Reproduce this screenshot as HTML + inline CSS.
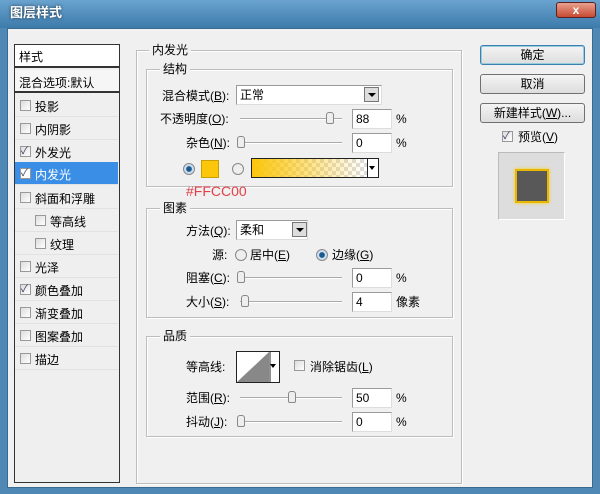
<!DOCTYPE html><html><head><meta charset="utf-8"><style>
*{margin:0;padding:0;box-sizing:border-box}
body{width:600px;height:494px;overflow:hidden;background:#4f88b5;font-family:"Liberation Sans","Noto Sans CJK SC",sans-serif;font-size:12px;color:#000;position:relative}
.a{position:absolute}
.t{position:absolute;white-space:nowrap;line-height:14px}
.fs{position:absolute;border:1px solid #bdbdbd;box-shadow:inset 1px 1px 0 #fff,1px 1px 0 #fff}
.lg{position:absolute;background:#f0f0f0;padding:0 3px;line-height:14px}
.in{position:absolute;background:#fff;border:1px solid #9a9a9a;border-right-color:#ddd;border-bottom-color:#ddd;padding-left:3px;line-height:18px}
.cb{position:absolute;width:11px;height:11px;border:1px solid #999;background:linear-gradient(135deg,#ddd,#fff)}
.sl{position:absolute;height:2px;border-top:1px solid #aaa;border-bottom:1px solid #fff}
.th{position:absolute;width:8px;height:12px;border:1px solid #888;border-radius:3px 3px 2px 2px;background:#eee}
.btn{position:absolute;border:1px solid #707070;border-radius:3px;background:linear-gradient(#f4f4f4,#ddd);text-align:center;line-height:18px}
.row{position:absolute;left:15px;width:103px;height:23px;border-bottom:1px solid #e2e2e2}
.row span{position:absolute;top:4px;left:20px}
.row .cb{left:5px;top:6px}
.dd{position:absolute;width:15px;height:15px;border:1px solid #777;background:#ddd}
.dd:after{content:"";position:absolute;left:3px;top:5px;border:4px solid transparent;border-top:4px solid #000}
.rd{position:absolute;width:12px;height:12px;border-radius:50%;border:1px solid #888;background:#eee}
</style></head><body>
<div class="a" style="left:0;top:0;width:600px;height:28px;background:linear-gradient(#6aa3cf,#3d7bab)"></div>
<div class="t" style="left:10px;top:6px;color:#fff;font-weight:bold;font-size:13px;text-shadow:0 0 3px #234">图层样式</div>
<div class="a" style="left:556px;top:2px;width:40px;height:16px;border:1px solid #5a2020;border-radius:3px;background:linear-gradient(#e8a090,#c84a30);color:#fff;text-align:center;font-weight:bold;line-height:14px">x</div>
<div class="a" style="left:7px;top:28px;width:586px;height:460px;background:#f0f0f0;border:1px solid #3a6a90"></div>

<div class="a" style="left:14px;top:44px;width:106px;height:439px;border:1px solid #333;background:#efefef"></div>
<div class="a" style="left:15px;top:45px;width:104px;height:23px;background:#fff;border-bottom:2px solid #333"></div>
<div class="t" style="left:19px;top:50px">样式</div>
<div class="a" style="left:15px;top:70px;width:104px;height:23px;background:#f6f6f6;border-bottom:2px solid #333"></div>
<div class="t" style="left:19px;top:76px">混合选项:默认</div>
<div class="row" style="top:94px"><div class="cb"></div><span>投影</span></div>
<div class="row" style="top:117px"><div class="cb"></div><span>内阴影</span></div>
<div class="row" style="top:140px"><div class="cb" style="font-size:10px;line-height:9px;color:#335">✓</div><span>外发光</span></div>
<div class="row" style="top:162px;background:#3a8ee6;color:#fff"><div class="cb" style="font-size:10px;line-height:9px;color:#335;background:#fff">✓</div><span>内发光</span></div>
<div class="row" style="top:186px"><div class="cb"></div><span>斜面和浮雕</span></div>
<div class="row" style="top:209px"><div class="cb" style="left:20px"></div><span style="left:35px">等高线</span></div>
<div class="row" style="top:232px"><div class="cb" style="left:20px"></div><span style="left:35px">纹理</span></div>
<div class="row" style="top:255px"><div class="cb"></div><span>光泽</span></div>
<div class="row" style="top:278px"><div class="cb" style="font-size:10px;line-height:9px;color:#335">✓</div><span>颜色叠加</span></div>
<div class="row" style="top:301px"><div class="cb"></div><span>渐变叠加</span></div>
<div class="row" style="top:324px"><div class="cb"></div><span>图案叠加</span></div>
<div class="row" style="top:347px"><div class="cb"></div><span>描边</span></div>

<div class="fs" style="left:136px;top:50px;width:326px;height:434px"></div>
<div class="lg" style="left:149px;top:43px">内发光</div>
<div class="fs" style="left:146px;top:69px;width:307px;height:118px"></div>
<div class="lg" style="left:160px;top:62px">结构</div>
<div class="t" style="left:162px;top:89px">混合模式(<u>B</u>):</div>
<div class="in" style="left:236px;top:85px;width:146px;height:20px">正常</div>
<div class="dd" style="left:364px;top:87px"></div>
<div class="t" style="left:160px;top:112px">不透明度(<u>O</u>):</div>
<div class="sl" style="left:240px;top:118px;width:102px"></div>
<div class="th" style="left:326px;top:112px"></div>
<div class="in" style="left:352px;top:109px;width:40px;height:20px">88</div>
<div class="t" style="left:396px;top:112px">%</div>
<div class="t" style="left:186px;top:136px">杂色(<u>N</u>):</div>
<div class="sl" style="left:240px;top:142px;width:102px"></div>
<div class="th" style="left:237px;top:136px"></div>
<div class="in" style="left:352px;top:133px;width:40px;height:20px">0</div>
<div class="t" style="left:396px;top:136px">%</div>
<div class="rd" style="left:183px;top:163px;background:radial-gradient(#1a5a90 35%,#cde 45%)"></div>
<div class="a" style="left:201px;top:160px;width:18px;height:18px;background:#fcc70a;border:1px solid #c9a000"></div>
<div class="rd" style="left:232px;top:163px"></div>
<div class="a" style="left:251px;top:158px;width:128px;height:20px;border:1px solid #222;background:linear-gradient(90deg,#fcc60a,rgba(252,198,10,0) 90%),repeating-conic-gradient(#ddd 0 25%,#fff 0 50%) 0 0/8px 8px"></div>
<div class="a" style="left:367px;top:159px;width:11px;height:18px;background:#fff;border-left:1px solid #222"></div>
<div class="a" style="left:369px;top:166px;border:3px solid transparent;border-top:4px solid #000"></div>
<div class="t" style="left:186px;top:183px;color:#e0404a;font-size:14px;line-height:16px">#FFCC00</div>

<div class="fs" style="left:146px;top:208px;width:307px;height:110px"></div>
<div class="lg" style="left:160px;top:201px">图素</div>
<div class="t" style="left:186px;top:224px">方法(<u>Q</u>):</div>
<div class="in" style="left:236px;top:220px;width:72px;height:20px">柔和</div>
<div class="dd" style="left:292px;top:222px"></div>
<div class="t" style="left:212px;top:248px">源:</div>
<div class="rd" style="left:235px;top:249px"></div>
<div class="t" style="left:250px;top:248px">居中(<u>E</u>)</div>
<div class="rd" style="left:316px;top:249px;background:radial-gradient(#1a5a90 35%,#cde 45%)"></div>
<div class="t" style="left:332px;top:248px">边缘(<u>G</u>)</div>
<div class="t" style="left:186px;top:271px">阻塞(<u>C</u>):</div>
<div class="sl" style="left:240px;top:277px;width:102px"></div>
<div class="th" style="left:237px;top:271px"></div>
<div class="in" style="left:352px;top:268px;width:40px;height:20px">0</div>
<div class="t" style="left:396px;top:271px">%</div>
<div class="t" style="left:186px;top:295px">大小(<u>S</u>):</div>
<div class="sl" style="left:240px;top:301px;width:102px"></div>
<div class="th" style="left:241px;top:295px"></div>
<div class="in" style="left:352px;top:292px;width:40px;height:20px">4</div>
<div class="t" style="left:396px;top:295px">像素</div>

<div class="fs" style="left:146px;top:336px;width:307px;height:101px"></div>
<div class="lg" style="left:160px;top:329px">品质</div>
<div class="t" style="left:186px;top:360px">等高线:</div>
<div class="a" style="left:236px;top:351px;width:44px;height:32px;border:1px solid #222;background:#fff;overflow:hidden">
<svg width="42" height="30"><polygon points="0,30 32,0 32,30" fill="#888"/><line x1="33" y1="0" x2="33" y2="30" stroke="#222"/></svg></div>
<div class="a" style="left:270px;top:364px;border:3px solid transparent;border-top:4px solid #000"></div>
<div class="cb" style="left:294px;top:360px"></div>
<div class="t" style="left:310px;top:360px">消除锯齿(<u>L</u>)</div>
<div class="t" style="left:186px;top:391px">范围(<u>R</u>):</div>
<div class="sl" style="left:240px;top:397px;width:102px"></div>
<div class="th" style="left:288px;top:391px"></div>
<div class="in" style="left:352px;top:388px;width:40px;height:20px">50</div>
<div class="t" style="left:396px;top:391px">%</div>
<div class="t" style="left:186px;top:415px">抖动(<u>J</u>):</div>
<div class="sl" style="left:240px;top:421px;width:102px"></div>
<div class="th" style="left:237px;top:415px"></div>
<div class="in" style="left:352px;top:412px;width:40px;height:20px">0</div>
<div class="t" style="left:396px;top:415px">%</div>

<div class="btn" style="left:480px;top:45px;width:105px;height:20px;border-color:#3c7fb1;box-shadow:inset 0 0 0 1px #9cd">确定</div>
<div class="btn" style="left:480px;top:74px;width:105px;height:20px">取消</div>
<div class="btn" style="left:480px;top:103px;width:105px;height:20px">新建样式(<u>W</u>)...</div>
<div class="cb" style="left:502px;top:131px;font-size:10px;line-height:9px;color:#335">✓</div>
<div class="t" style="left:518px;top:130px">预览(<u>V</u>)</div>
<div class="a" style="left:498px;top:152px;width:67px;height:68px;background:#ddd;border:1px solid #bbb;border-bottom-color:#fff;border-right-color:#fff"></div>
<div class="a" style="left:515px;top:169px;width:34px;height:34px;background:#585858;border:2px solid #e8b800;box-shadow:0 0 3px #fc0"></div>
</body></html>
